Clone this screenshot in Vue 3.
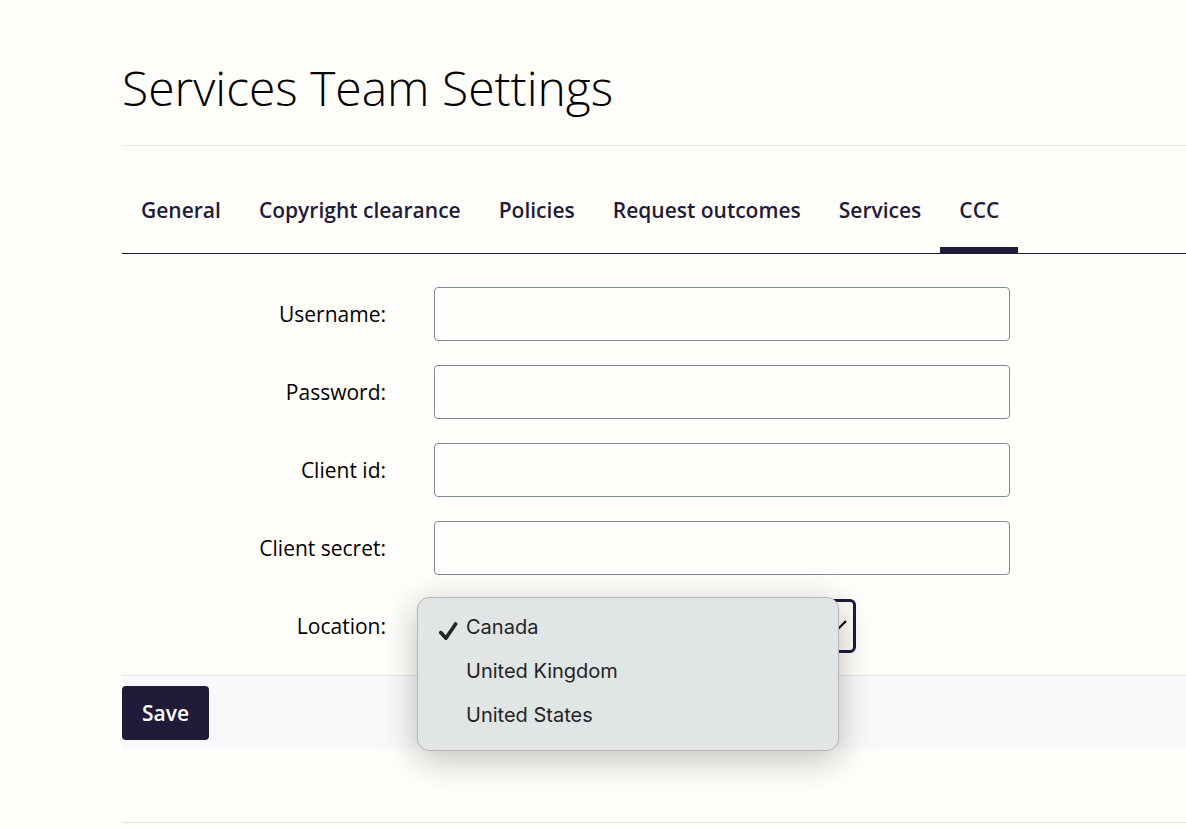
<script setup>
import { ref } from "vue";

const tabs = ["General", "Copyright clearance", "Policies", "Request outcomes", "Services", "CCC"];
const activeTab = ref("CCC")

const fields = ref([
    { id: "username", label: "Username:", type: "text", value: "" },
    { id: "password", label: "Password:", type: "password", value: "" },
    { id: "client-id", label: "Client id:", type: "text", value: "" },
    { id: "client-secret", label: "Client secret:", type: "password", value: "" }
])

const locations = ["Canada", "United Kingdom", "United States"];
const location = ref("Canada")
const showMenu = ref(true)

const openMenu = () => {
    showMenu.value = true;
}

const pickLocation = (name) => {
    location.value = name;
    showMenu.value = false;
}
</script>

<template>
    <main class="page">
        <h1 class="title">Services Team Settings</h1>

        <nav class="tabs">
            <a
                v-for="tab in tabs"
                :key="tab"
                href="#"
                class="tab"
                :class="{ active: tab === activeTab }"
                @click.prevent="activeTab = tab"
            >{{ tab }}</a>
        </nav>

        <form @submit.prevent>
            <div class="fields">
                <div class="row" v-for="field in fields" :key="field.id">
                    <label :for="field.id">{{ field.label }}</label>
                    <input class="control" :id="field.id" :type="field.type" v-model="field.value" autocomplete="off">
                </div>

                <div class="row">
                    <label for="location">Location:</label>
                    <div class="select-wrap">
                        <select class="control select" id="location" v-model="location" @mousedown.prevent="openMenu">
                            <option v-for="name in locations" :key="name">{{ name }}</option>
                        </select>
                        <svg class="chevron" viewBox="0 0 20 12" aria-hidden="true">
                            <path d="M1 1 L10 10 L19 1" />
                        </svg>

                        <div class="menu" v-if="showMenu" role="listbox" aria-label="Location">
                            <button
                                v-for="name in locations"
                                :key="name"
                                type="button"
                                role="option"
                                class="menu-item"
                                :aria-selected="name === location"
                                @click="pickLocation(name)"
                            >
                                <span class="mark">
                                    <svg v-if="name === location" viewBox="0 0 20 20" aria-hidden="true">
                                        <path d="M2.8 11.6 L7.9 17.2 L17.6 3" />
                                    </svg>
                                </span>
                                <span>{{ name }}</span>
                            </button>
                        </div>
                    </div>
                </div>
            </div>

            <div class="actions">
                <button class="save" type="submit">Save</button>
            </div>
        </form>

        <hr class="divider">
    </main>
</template>

<style>
body {
    background-color: #fffefb;
}
</style>

<style scoped>
.page {
    padding: 55px 0 0 122px;
    font-family: "Open Sans", sans-serif;
    font-size: 21px;
    line-height: 28px;
    color: #000;
}

.title {
    margin: 0;
    padding-bottom: 25px;
    border-bottom: 1px solid #e9e9ec;
    font-size: 48px;
    line-height: 65px;
    font-weight: 300;
}

.tabs {
    display: flex;
    margin-top: 32px;
    border-bottom: 1px solid #1f1b39;
}

.tab {
    padding: 18px 19px 23px;
    border-bottom: 6px solid transparent;
    color: #1f1b39;
    font-weight: 600;
    text-decoration: none;
    white-space: nowrap;
}

.tab.active {
    border-bottom-color: #1f1b39;
}

.fields {
    display: flex;
    flex-direction: column;
    gap: 24px;
    padding: 33px 0 22px;
}

.row {
    display: grid;
    grid-template-columns: 264px minmax(0, 576px);
    column-gap: 48px;
    align-items: center;
}

label {
    text-align: right;
}

.control {
    box-sizing: border-box;
    width: 100%;
    height: 54px;
    padding: 0 16px;
    border: 1px solid #808b98;
    border-radius: 4px;
    background-color: transparent;
    font: inherit;
    color: inherit;
}

.select-wrap {
    position: relative;
    width: 422px;
}

.select {
    display: block;
    appearance: none;
    border: 3px solid #1f1b39;
    border-radius: 6px;
    outline: none;
}

.chevron {
    position: absolute;
    top: 21px;
    right: 9px;
    width: 20px;
    height: 12px;
    fill: none;
    stroke: #000;
    stroke-width: 2;
    pointer-events: none;
}

.menu {
    position: absolute;
    top: -2px;
    left: -17px;
    z-index: 10;
    box-sizing: border-box;
    width: 100%;
    padding: 7px 0 13px;
    border: 1px solid #b4b6b6;
    border-radius: 12px;
    background-color: #e1e5e6;
    box-shadow: 0 8px 36px rgba(0, 0, 0, 0.26);
}

.menu-item {
    display: flex;
    align-items: center;
    width: 100%;
    height: 44px;
    padding: 0 20px;
    border: none;
    background: none;
    font-family: Inter, sans-serif;
    font-size: 20px;
    color: #232424;
    text-align: left;
}

.mark {
    width: 28px;
    height: 12px;
}

.mark svg {
    display: block;
    width: 20px;
    height: 20px;
    fill: none;
    stroke: #232424;
    stroke-width: 3.7;
    stroke-linecap: round;
    stroke-linejoin: round;
}

.actions {
    padding: 10px 0;
    border-top: 1px solid #e6e7ea;
    background-color: #f7f9fb;
}

.save {
    display: block;
    height: 54px;
    padding: 0 20px;
    border: none;
    border-radius: 4px;
    background-color: #1f1b39;
    color: #fff;
    font: inherit;
    font-weight: 600;
}

.save,
.menu-item {
    cursor: pointer;
}

.divider {
    margin: 72px 0 0;
    border: none;
    border-top: 1px solid #e2e3e5;
}
</style>
